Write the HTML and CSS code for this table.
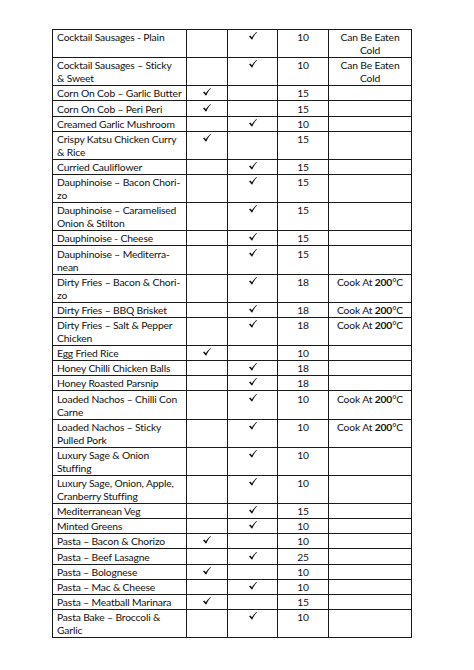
FILE: index.html
```html
<!DOCTYPE html>
<html>
<head>
<meta charset="utf-8">
<link rel="stylesheet" href="styles.css">
</head>
<body>
<table class="menu">
<colgroup>
<col class="c-name"><col class="c-a"><col class="c-b"><col class="c-num"><col class="c-note">
</colgroup>
<tbody>
<tr><td class="name">Cocktail Sausages - Plain</td><td></td><td class="tick"><svg class="ck" viewBox="0 0 8 8"><path d="M0 4.3 L1.3 3.6 L2.9 5.3 C4.1 3.3 5.6 1.4 7.6 0 L8 0.5 C6.1 2.1 4.5 4.5 3.3 7.6 L2.7 7.6 Z"/></svg></td><td class="num">10</td><td class="note">Can Be Eaten<br>Cold</td></tr>
<tr><td class="name">Cocktail Sausages – Sticky<br>&amp; Sweet</td><td></td><td class="tick"><svg class="ck" viewBox="0 0 8 8"><path d="M0 4.3 L1.3 3.6 L2.9 5.3 C4.1 3.3 5.6 1.4 7.6 0 L8 0.5 C6.1 2.1 4.5 4.5 3.3 7.6 L2.7 7.6 Z"/></svg></td><td class="num">10</td><td class="note">Can Be Eaten<br>Cold</td></tr>
<tr><td class="name">Corn On Cob – Garlic Butter</td><td class="tick"><svg class="ck" viewBox="0 0 8 8"><path d="M0 4.3 L1.3 3.6 L2.9 5.3 C4.1 3.3 5.6 1.4 7.6 0 L8 0.5 C6.1 2.1 4.5 4.5 3.3 7.6 L2.7 7.6 Z"/></svg></td><td></td><td class="num">15</td><td></td></tr>
<tr><td class="name">Corn On Cob – Peri Peri</td><td class="tick"><svg class="ck" viewBox="0 0 8 8"><path d="M0 4.3 L1.3 3.6 L2.9 5.3 C4.1 3.3 5.6 1.4 7.6 0 L8 0.5 C6.1 2.1 4.5 4.5 3.3 7.6 L2.7 7.6 Z"/></svg></td><td></td><td class="num">15</td><td></td></tr>
<tr><td class="name">Creamed Garlic Mushroom</td><td></td><td class="tick"><svg class="ck" viewBox="0 0 8 8"><path d="M0 4.3 L1.3 3.6 L2.9 5.3 C4.1 3.3 5.6 1.4 7.6 0 L8 0.5 C6.1 2.1 4.5 4.5 3.3 7.6 L2.7 7.6 Z"/></svg></td><td class="num">10</td><td></td></tr>
<tr><td class="name">Crispy Katsu Chicken Curry<br>&amp; Rice</td><td class="tick"><svg class="ck" viewBox="0 0 8 8"><path d="M0 4.3 L1.3 3.6 L2.9 5.3 C4.1 3.3 5.6 1.4 7.6 0 L8 0.5 C6.1 2.1 4.5 4.5 3.3 7.6 L2.7 7.6 Z"/></svg></td><td></td><td class="num">15</td><td></td></tr>
<tr><td class="name">Curried Cauliflower</td><td></td><td class="tick"><svg class="ck" viewBox="0 0 8 8"><path d="M0 4.3 L1.3 3.6 L2.9 5.3 C4.1 3.3 5.6 1.4 7.6 0 L8 0.5 C6.1 2.1 4.5 4.5 3.3 7.6 L2.7 7.6 Z"/></svg></td><td class="num">15</td><td></td></tr>
<tr><td class="name">Dauphinoise – Bacon Chori-<br>zo</td><td></td><td class="tick"><svg class="ck" viewBox="0 0 8 8"><path d="M0 4.3 L1.3 3.6 L2.9 5.3 C4.1 3.3 5.6 1.4 7.6 0 L8 0.5 C6.1 2.1 4.5 4.5 3.3 7.6 L2.7 7.6 Z"/></svg></td><td class="num">15</td><td></td></tr>
<tr><td class="name">Dauphinoise – Caramelised<br>Onion &amp; Stilton</td><td></td><td class="tick"><svg class="ck" viewBox="0 0 8 8"><path d="M0 4.3 L1.3 3.6 L2.9 5.3 C4.1 3.3 5.6 1.4 7.6 0 L8 0.5 C6.1 2.1 4.5 4.5 3.3 7.6 L2.7 7.6 Z"/></svg></td><td class="num">15</td><td></td></tr>
<tr><td class="name">Dauphinoise - Cheese</td><td></td><td class="tick"><svg class="ck" viewBox="0 0 8 8"><path d="M0 4.3 L1.3 3.6 L2.9 5.3 C4.1 3.3 5.6 1.4 7.6 0 L8 0.5 C6.1 2.1 4.5 4.5 3.3 7.6 L2.7 7.6 Z"/></svg></td><td class="num">15</td><td></td></tr>
<tr><td class="name">Dauphinoise – Mediterra-<br>nean</td><td></td><td class="tick"><svg class="ck" viewBox="0 0 8 8"><path d="M0 4.3 L1.3 3.6 L2.9 5.3 C4.1 3.3 5.6 1.4 7.6 0 L8 0.5 C6.1 2.1 4.5 4.5 3.3 7.6 L2.7 7.6 Z"/></svg></td><td class="num">15</td><td></td></tr>
<tr><td class="name">Dirty Fries – Bacon &amp; Chori-<br>zo</td><td></td><td class="tick"><svg class="ck" viewBox="0 0 8 8"><path d="M0 4.3 L1.3 3.6 L2.9 5.3 C4.1 3.3 5.6 1.4 7.6 0 L8 0.5 C6.1 2.1 4.5 4.5 3.3 7.6 L2.7 7.6 Z"/></svg></td><td class="num">18</td><td class="note">Cook At <b>200</b>°C</td></tr>
<tr><td class="name">Dirty Fries – BBQ Brisket</td><td></td><td class="tick"><svg class="ck" viewBox="0 0 8 8"><path d="M0 4.3 L1.3 3.6 L2.9 5.3 C4.1 3.3 5.6 1.4 7.6 0 L8 0.5 C6.1 2.1 4.5 4.5 3.3 7.6 L2.7 7.6 Z"/></svg></td><td class="num">18</td><td class="note">Cook At <b>200</b>°C</td></tr>
<tr><td class="name">Dirty Fries – Salt &amp; Pepper<br>Chicken</td><td></td><td class="tick"><svg class="ck" viewBox="0 0 8 8"><path d="M0 4.3 L1.3 3.6 L2.9 5.3 C4.1 3.3 5.6 1.4 7.6 0 L8 0.5 C6.1 2.1 4.5 4.5 3.3 7.6 L2.7 7.6 Z"/></svg></td><td class="num">18</td><td class="note">Cook At <b>200</b>°C</td></tr>
<tr><td class="name">Egg Fried Rice</td><td class="tick"><svg class="ck" viewBox="0 0 8 8"><path d="M0 4.3 L1.3 3.6 L2.9 5.3 C4.1 3.3 5.6 1.4 7.6 0 L8 0.5 C6.1 2.1 4.5 4.5 3.3 7.6 L2.7 7.6 Z"/></svg></td><td></td><td class="num">10</td><td></td></tr>
<tr><td class="name">Honey Chilli Chicken Balls</td><td></td><td class="tick"><svg class="ck" viewBox="0 0 8 8"><path d="M0 4.3 L1.3 3.6 L2.9 5.3 C4.1 3.3 5.6 1.4 7.6 0 L8 0.5 C6.1 2.1 4.5 4.5 3.3 7.6 L2.7 7.6 Z"/></svg></td><td class="num">18</td><td></td></tr>
<tr><td class="name">Honey Roasted Parsnip</td><td></td><td class="tick"><svg class="ck" viewBox="0 0 8 8"><path d="M0 4.3 L1.3 3.6 L2.9 5.3 C4.1 3.3 5.6 1.4 7.6 0 L8 0.5 C6.1 2.1 4.5 4.5 3.3 7.6 L2.7 7.6 Z"/></svg></td><td class="num">18</td><td></td></tr>
<tr><td class="name">Loaded Nachos – Chilli Con<br>Carne</td><td></td><td class="tick"><svg class="ck" viewBox="0 0 8 8"><path d="M0 4.3 L1.3 3.6 L2.9 5.3 C4.1 3.3 5.6 1.4 7.6 0 L8 0.5 C6.1 2.1 4.5 4.5 3.3 7.6 L2.7 7.6 Z"/></svg></td><td class="num">10</td><td class="note">Cook At <b>200</b>°C</td></tr>
<tr><td class="name">Loaded Nachos – Sticky<br>Pulled Pork</td><td></td><td class="tick"><svg class="ck" viewBox="0 0 8 8"><path d="M0 4.3 L1.3 3.6 L2.9 5.3 C4.1 3.3 5.6 1.4 7.6 0 L8 0.5 C6.1 2.1 4.5 4.5 3.3 7.6 L2.7 7.6 Z"/></svg></td><td class="num">10</td><td class="note">Cook At <b>200</b>°C</td></tr>
<tr><td class="name">Luxury Sage &amp; Onion<br>Stuffing</td><td></td><td class="tick"><svg class="ck" viewBox="0 0 8 8"><path d="M0 4.3 L1.3 3.6 L2.9 5.3 C4.1 3.3 5.6 1.4 7.6 0 L8 0.5 C6.1 2.1 4.5 4.5 3.3 7.6 L2.7 7.6 Z"/></svg></td><td class="num">10</td><td></td></tr>
<tr><td class="name">Luxury Sage, Onion, Apple,<br>Cranberry Stuffing</td><td></td><td class="tick"><svg class="ck" viewBox="0 0 8 8"><path d="M0 4.3 L1.3 3.6 L2.9 5.3 C4.1 3.3 5.6 1.4 7.6 0 L8 0.5 C6.1 2.1 4.5 4.5 3.3 7.6 L2.7 7.6 Z"/></svg></td><td class="num">10</td><td></td></tr>
<tr><td class="name">Mediterranean Veg</td><td></td><td class="tick"><svg class="ck" viewBox="0 0 8 8"><path d="M0 4.3 L1.3 3.6 L2.9 5.3 C4.1 3.3 5.6 1.4 7.6 0 L8 0.5 C6.1 2.1 4.5 4.5 3.3 7.6 L2.7 7.6 Z"/></svg></td><td class="num">15</td><td></td></tr>
<tr><td class="name">Minted Greens</td><td></td><td class="tick"><svg class="ck" viewBox="0 0 8 8"><path d="M0 4.3 L1.3 3.6 L2.9 5.3 C4.1 3.3 5.6 1.4 7.6 0 L8 0.5 C6.1 2.1 4.5 4.5 3.3 7.6 L2.7 7.6 Z"/></svg></td><td class="num">10</td><td></td></tr>
<tr><td class="name">Pasta – Bacon &amp; Chorizo</td><td class="tick"><svg class="ck" viewBox="0 0 8 8"><path d="M0 4.3 L1.3 3.6 L2.9 5.3 C4.1 3.3 5.6 1.4 7.6 0 L8 0.5 C6.1 2.1 4.5 4.5 3.3 7.6 L2.7 7.6 Z"/></svg></td><td></td><td class="num">10</td><td></td></tr>
<tr><td class="name">Pasta – Beef Lasagne</td><td></td><td class="tick"><svg class="ck" viewBox="0 0 8 8"><path d="M0 4.3 L1.3 3.6 L2.9 5.3 C4.1 3.3 5.6 1.4 7.6 0 L8 0.5 C6.1 2.1 4.5 4.5 3.3 7.6 L2.7 7.6 Z"/></svg></td><td class="num">25</td><td></td></tr>
<tr><td class="name">Pasta – Bolognese</td><td class="tick"><svg class="ck" viewBox="0 0 8 8"><path d="M0 4.3 L1.3 3.6 L2.9 5.3 C4.1 3.3 5.6 1.4 7.6 0 L8 0.5 C6.1 2.1 4.5 4.5 3.3 7.6 L2.7 7.6 Z"/></svg></td><td></td><td class="num">10</td><td></td></tr>
<tr><td class="name">Pasta – Mac &amp; Cheese</td><td></td><td class="tick"><svg class="ck" viewBox="0 0 8 8"><path d="M0 4.3 L1.3 3.6 L2.9 5.3 C4.1 3.3 5.6 1.4 7.6 0 L8 0.5 C6.1 2.1 4.5 4.5 3.3 7.6 L2.7 7.6 Z"/></svg></td><td class="num">10</td><td></td></tr>
<tr><td class="name">Pasta – Meatball Marinara</td><td class="tick"><svg class="ck" viewBox="0 0 8 8"><path d="M0 4.3 L1.3 3.6 L2.9 5.3 C4.1 3.3 5.6 1.4 7.6 0 L8 0.5 C6.1 2.1 4.5 4.5 3.3 7.6 L2.7 7.6 Z"/></svg></td><td></td><td class="num">15</td><td></td></tr>
<tr><td class="name">Pasta Bake – Broccoli &amp;<br>Garlic</td><td></td><td class="tick"><svg class="ck" viewBox="0 0 8 8"><path d="M0 4.3 L1.3 3.6 L2.9 5.3 C4.1 3.3 5.6 1.4 7.6 0 L8 0.5 C6.1 2.1 4.5 4.5 3.3 7.6 L2.7 7.6 Z"/></svg></td><td class="num">10</td><td></td></tr>
</tbody>
</table>
</body>
</html>
```

FILE: styles.css
```css
html, body {
  margin: 0;
  padding: 0;
  background: #fff;
}
body {
  padding: 29px 0 0 52px;
}
.menu {
  border-collapse: collapse;
  table-layout: fixed;
  width: 359px;
  font-family: Lato, "Open Sans", sans-serif;
  font-size: 10.3px;
  letter-spacing: -0.15px;
  line-height: 13px;
  color: #111;
}
.c-name { width: 134px; }
.c-a { width: 41px; }
.c-b { width: 50px; }
.c-num { width: 51px; }
.c-note { width: 83px; }
.menu td {
  border: 1px solid #1a1a1a;
  padding: 1.15px 3px 0 4px;
  vertical-align: top;
  white-space: nowrap;
  overflow: hidden;
}
.menu td.num, .menu td.note, .menu td.tick {
  text-align: center;
  padding-left: 0;
  padding-right: 0;
}
.note b {
  font-weight: 700;
}
.ck {
  display: block;
  width: 8px;
  height: 8px;
  margin: 1px auto 0;
  fill: #111;
}
```
